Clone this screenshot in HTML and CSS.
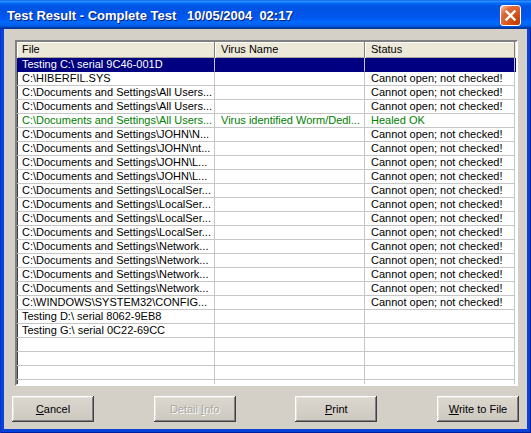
FILE: index.html
```html
<!DOCTYPE html>
<html lang="en">
<head>
  <meta charset="UTF-8" />
  <title>Test Result - Complete Test</title>
  <link rel="stylesheet" href="styles.css">
</head>
<body>
  <div class="window">
    <div class="titlebar">
      <span class="title">Test Result - Complete Test&nbsp;&nbsp; 10/05/2004&nbsp; 02:17</span>
      <button class="close" aria-label="Close">
        <svg width="13" height="13" viewBox="0 0 13 13">
          <path d="M2.5 2.5 L10.5 10.5 M10.5 2.5 L2.5 10.5" stroke="#fff" stroke-width="2.4" stroke-linecap="square" fill="none"/>
        </svg>
      </button>
    </div>

    <div class="frame">
      <div class="client">
        <div class="listview">
          <div class="row head">
            <div class="cell">File</div>
            <div class="cell">Virus Name</div>
            <div class="cell">Status</div>
          </div>
          <div class="row selected">
            <div class="cell">Testing C:\ serial 9C46-001D</div>
            <div class="cell"></div>
            <div class="cell"></div>
          </div>
          <div class="row">
            <div class="cell">C:\HIBERFIL.SYS</div>
            <div class="cell"></div>
            <div class="cell">Cannot open; not checked!</div>
          </div>
          <div class="row">
            <div class="cell">C:\Documents and Settings\All Users...</div>
            <div class="cell"></div>
            <div class="cell">Cannot open; not checked!</div>
          </div>
          <div class="row">
            <div class="cell">C:\Documents and Settings\All Users...</div>
            <div class="cell"></div>
            <div class="cell">Cannot open; not checked!</div>
          </div>
          <div class="row healed">
            <div class="cell">C:\Documents and Settings\All Users...</div>
            <div class="cell">Virus identified Worm/Dedl...</div>
            <div class="cell">Healed OK</div>
          </div>
          <div class="row">
            <div class="cell">C:\Documents and Settings\JOHN\N...</div>
            <div class="cell"></div>
            <div class="cell">Cannot open; not checked!</div>
          </div>
          <div class="row">
            <div class="cell">C:\Documents and Settings\JOHN\nt...</div>
            <div class="cell"></div>
            <div class="cell">Cannot open; not checked!</div>
          </div>
          <div class="row">
            <div class="cell">C:\Documents and Settings\JOHN\L...</div>
            <div class="cell"></div>
            <div class="cell">Cannot open; not checked!</div>
          </div>
          <div class="row">
            <div class="cell">C:\Documents and Settings\JOHN\L...</div>
            <div class="cell"></div>
            <div class="cell">Cannot open; not checked!</div>
          </div>
          <div class="row">
            <div class="cell">C:\Documents and Settings\LocalSer...</div>
            <div class="cell"></div>
            <div class="cell">Cannot open; not checked!</div>
          </div>
          <div class="row">
            <div class="cell">C:\Documents and Settings\LocalSer...</div>
            <div class="cell"></div>
            <div class="cell">Cannot open; not checked!</div>
          </div>
          <div class="row">
            <div class="cell">C:\Documents and Settings\LocalSer...</div>
            <div class="cell"></div>
            <div class="cell">Cannot open; not checked!</div>
          </div>
          <div class="row">
            <div class="cell">C:\Documents and Settings\LocalSer...</div>
            <div class="cell"></div>
            <div class="cell">Cannot open; not checked!</div>
          </div>
          <div class="row">
            <div class="cell">C:\Documents and Settings\Network...</div>
            <div class="cell"></div>
            <div class="cell">Cannot open; not checked!</div>
          </div>
          <div class="row">
            <div class="cell">C:\Documents and Settings\Network...</div>
            <div class="cell"></div>
            <div class="cell">Cannot open; not checked!</div>
          </div>
          <div class="row">
            <div class="cell">C:\Documents and Settings\Network...</div>
            <div class="cell"></div>
            <div class="cell">Cannot open; not checked!</div>
          </div>
          <div class="row">
            <div class="cell">C:\Documents and Settings\Network...</div>
            <div class="cell"></div>
            <div class="cell">Cannot open; not checked!</div>
          </div>
          <div class="row">
            <div class="cell">C:\WINDOWS\SYSTEM32\CONFIG...</div>
            <div class="cell"></div>
            <div class="cell">Cannot open; not checked!</div>
          </div>
          <div class="row">
            <div class="cell">Testing D:\ serial 8062-9EB8</div>
            <div class="cell"></div>
            <div class="cell"></div>
          </div>
          <div class="row">
            <div class="cell">Testing G:\ serial 0C22-69CC</div>
            <div class="cell"></div>
            <div class="cell"></div>
          </div>
          <div class="row"><div class="cell"></div><div class="cell"></div><div class="cell"></div></div>
          <div class="row"><div class="cell"></div><div class="cell"></div><div class="cell"></div></div>
          <div class="row"><div class="cell"></div><div class="cell"></div><div class="cell"></div></div>
          <div class="row"><div class="cell"></div><div class="cell"></div><div class="cell"></div></div>
        </div>

        <div class="buttons">
          <button class="btn"><u>C</u>ancel</button>
          <button class="btn" disabled>Detail <u>I</u>nfo</button>
          <button class="btn"><u>P</u>rint</button>
          <button class="btn"><u>W</u>rite to File</button>
        </div>
      </div>
    </div>
  </div>
</body>
</html>
```

FILE: styles.css
```css
html, body {
  margin: 0;
  padding: 0;
}
body {
  font-family: "Liberation Sans", Arial, sans-serif;
  font-size: 11px;
}
.window {
  width: 531px;
  height: 433px;
  display: flex;
  flex-direction: column;
  background: #0842d6;
}

/* XP style caption */
.titlebar {
  height: 29px;
  display: flex;
  align-items: center;
  justify-content: space-between;
  padding: 0 10px 0 7px;
  box-sizing: border-box;
  background: linear-gradient(to bottom, #0058ee 0%, #3593ff 4%, #288eff 6%, #127dff 8%, #036ffc 10%, #0262ee 14%, #0057e5 20%, #0054e3 24%, #0055eb 56%, #005bf5 66%, #026afe 76%, #0062ef 86%, #0052d6 92%, #0040ab 94%, #003092 100%);
}
.title {
  color: white;
  font-family: "Liberation Sans", Arial, sans-serif;
  font-weight: bold;
  font-size: 13px;
  text-shadow: 1px 1px #0a1e6e;
  margin-top: 1px;
}
.close {
  width: 21px;
  height: 21px;
  padding: 0;
  border: 1px solid #fff;
  border-radius: 3px;
  display: flex;
  align-items: center;
  justify-content: center;
  background: radial-gradient(circle at 85% 85%, #c23c00 0%, #dd5a22 50%, #e06a3a 70%, #f6a888 90%, #fff 100%);
  margin-top: 1px;
}

.frame {
  flex: 1;
  display: flex;
  padding: 0 4px 4px;
  box-shadow: inset 1px 0 #0831d9, inset -1px 0 #001ea0, inset 0 -1px #001ea0;
}
.client {
  flex: 1;
  background: #d4d0c8;
  display: flex;
  flex-direction: column;
  padding: 11px 9px 0 11px;
}

/* list view */
.listview {
  height: 342px;
  width: 499px;
  overflow: hidden;
  background: white;
  border: 2px solid;
  border-color: #808080 #fff #fff #808080;
  box-shadow: inset 1px 1px #404040;
}
.row {
  display: grid;
  grid-template-columns: 198px 150px 150px;
  height: 14px;
  color: #000;
}
.cell {
  border-right: 1px solid #c6c6c6;
  border-bottom: 1px solid #c6c6c6;
  padding-left: 6px;
  line-height: 13px;
  white-space: nowrap;
  overflow: hidden;
}
.row .cell:first-child {
  padding-left: 5px;
}
.head {
  height: 16px;
  background: #ece9d8;
}
.head .cell {
  line-height: 15px;
  border-bottom: none;
  border-right: 1px solid #808080;
  box-shadow: inset 1px 1px #fff, inset 0 -1px #aca899;
}
.selected {
  background: #000080;
  color: white;
}
.selected .cell {
  border-bottom-color: #000080;
}
.healed {
  color: #008000;
}

/* push buttons */
.buttons {
  display: flex;
  justify-content: space-between;
  margin: 10px -1px 0 -3px;
}
.btn {
  width: 82px;
  height: 26px;
  font-family: "Liberation Sans", Arial, sans-serif;
  font-size: 11px;
  font-weight: normal;
  color: #000;
  background: linear-gradient(#dcd8d0, #ccc8c0);
  border: none;
  padding: 0;
  box-shadow: inset -1px -1px #404040, inset 1px 1px #fff, inset -2px -2px #808080, inset 2px 2px #e4e2dc;
}
.btn:disabled {
  color: #a8a6a0;
  text-shadow: 1px 1px #fff;
}
```
